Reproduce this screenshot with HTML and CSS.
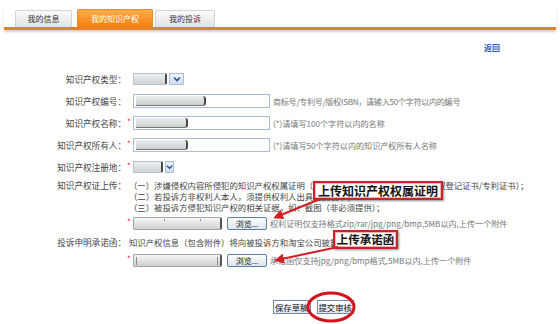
FILE: index.html
```html
<!DOCTYPE html>
<html lang="zh-CN">
<head>
<meta charset="utf-8">
<title>我的知识产权</title>
<link rel="stylesheet" href="styles.css">
</head>
<body>
<div class="tabs">
  <div class="tab t1">我的信息</div>
  <div class="tab t2">我的知识产权</div>
  <div class="tab t3">我的投诉</div>
</div>
<div class="back"><span class="back-link">返回</span></div>

<div class="form">
  <div class="row">
    <div class="lbl">知识产权类型：</div><div class="req"></div>
    <div class="select s1"><span class="sblur sb34"></span><span class="sarrow"><svg width="8" height="6" viewBox="0 0 8 6"><path d="M1 1.5 L4 4.5 L7 1.5" fill="none" stroke="#2b4f93" stroke-width="1.6"/></svg></span></div>
  </div>
  <div class="row">
    <div class="lbl">知识产权编号：</div><div class="req"></div>
    <div class="input"><span class="blur bw70"></span></div>
    <div class="hint tight">商标号/专利号/版权ISBN，请输入50个字符以内的编号</div>
  </div>
  <div class="row">
    <div class="lbl">知识产权名称：</div><div class="req">*</div>
    <div class="input"><span class="blur bw52"></span></div>
    <div class="hint">(*)请填写100个字符以内的名称</div>
  </div>
  <div class="row">
    <div class="lbl">知识产权所有人：</div><div class="req">*</div>
    <div class="input"><span class="blur bw52"></span></div>
    <div class="hint">(*)请填写50个字符以内的知识产权所有人名称</div>
  </div>
  <div class="row">
    <div class="lbl">知识产权注册地：</div><div class="req">*</div>
    <div class="select s2"><span class="sblur sb30"></span><span class="sarrow sa-small"><svg width="8" height="6" viewBox="0 0 8 6"><path d="M1 1.5 L4 4.5 L7 1.5" fill="none" stroke="#2b4f93" stroke-width="1.6"/></svg></span></div>
  </div>

  <div class="drow d1">
    <div class="lbl">知识产权证上传：</div>
    <div class="desc">
      <div>（一）涉嫌侵权内容所侵犯的知识产权权属证明（如：商标注册证/商标受理书/著作权登记证书/专利证书）；</div>
      <div>（二）若投诉方非权利人本人，须提供权利人出具的授权书；</div>
      <div>（三）被投诉方侵犯知识产权的相关证据，如：截图（非必须提供）；</div>
    </div>
  </div>
  <div class="row frow f1">
    <div class="lbl"></div><div class="req">*</div>
    <div class="fbox"><span class="tick"></span><span class="tick tk2"></span></div>
    <div class="browse">浏览...</div>
    <div class="hint fhint">权利证明仅支持格式zip/rar/jpg/png/bmp,5MB以内,上传一个附件</div>
  </div>

  <div class="drow d2">
    <div class="lbl">投诉申明承诺函：</div>
    <div class="desc">
      <div>知识产权信息（包含附件）将向被投诉方和淘宝公司披露。</div>
    </div>
  </div>
  <div class="row frow f2">
    <div class="lbl"></div><div class="req">*</div>
    <div class="fbox"><span class="tick tk0"></span><span class="tick tk3"></span></div>
    <div class="browse">浏览...</div>
    <div class="hint fhint">承诺函仅支持jpg/png/bmp格式,5MB以内,上传一个附件</div>
  </div>

  <div class="btns">
    <div class="btn">保存草稿</div>
    <div class="btn">提交审核</div>
  </div>
</div>

<div class="callout c1">上传知识产权权属证明</div>
<div class="callout c2">上传承诺函</div>

<svg class="overlay" width="560" height="324" viewBox="0 0 560 324">
  <defs>
    <marker id="ah" markerWidth="5" markerHeight="5" refX="3.5" refY="2.5" orient="auto" markerUnits="strokeWidth">
      <path d="M0,0 L5,2.5 L0,5 z" fill="#d21f26"/>
    </marker>
  </defs>
  <line x1="320" y1="199" x2="276" y2="217" stroke="#d21f26" stroke-width="2" marker-end="url(#ah)"/>
  <line x1="338" y1="247" x2="277" y2="260" stroke="#d21f26" stroke-width="2" marker-end="url(#ah)"/>
  <ellipse cx="331" cy="307" rx="23" ry="14" fill="none" stroke="#d3141c" stroke-width="3"/>
</svg>
</body>
</html>
```
FILE: styles.css
```css
* { box-sizing: border-box; }
body {
  margin: 0;
  width: 560px;
  height: 324px;
  background: #fff;
  font-family: "Noto Sans CJK SC", "Noto Sans", sans-serif;
  font-size: 8.4px;
  color: #444;
  position: relative;
  overflow: hidden;
}
.tabs {
  display: flex;
  align-items: flex-end;
  margin: 9px 4px 0;
  padding-left: 11px;
  height: 21px;
  border-bottom: 3px solid #e97f26;
  box-shadow: 0 2px 2px rgba(0, 0, 0, 0.18);
}
.tab {
  height: 17px;
  line-height: 16px;
  text-align: center;
  font-size: 8px;
  color: #333;
  background: linear-gradient(#fbfbfb, #e2e2e2);
  border: 1px solid #d3d3d3;
  border-bottom: none;
  border-radius: 2px 2px 0 0;
}
.t1 { width: 57px; margin-right: 5px; }
.t2 {
  width: 76px;
  height: 18px;
  line-height: 17px;
  margin-right: 2px;
  background: linear-gradient(#ffae4c, #f47e0e);
  border-color: #ef8a2a;
  color: #fff;
}
.t3 { width: 60px; }
.back {
  margin-top: 13px;
  height: 10px;
  line-height: 10px;
  text-align: right;
  padding-right: 60px;
  font-size: 8px;
}
.back-link { color: #3460b5; font-weight: bold; }
.form { padding-top: 11px; }
.row {
  display: flex;
  align-items: center;
  height: 14px;
  margin-top: 8px;
}
.lbl {
  width: 126px;
  flex: none;
  text-align: right;
  font-size: 8.6px;
  color: #444;
  white-space: nowrap;
}
.req {
  width: 7px;
  flex: none;
  color: #e0242a;
  padding-left: 1px;
  font-size: 8px;
  line-height: 8px;
  align-self: flex-start;
  padding-top: 2px;
}
.input {
  width: 137px;
  height: 14px;
  border: 1px solid #a9bed4;
  display: flex;
  align-items: center;
  padding-left: 2px;
}
.blur {
  height: 10px;
  background: linear-gradient(#eceeee, #cbcfcf);
  border-right: 2px solid #4a4a4a;
  border-bottom: 1px solid #777;
  border-radius: 0 3px 3px 0;
}
.bw70 { width: 70px; }
.bw52 { width: 52px; }
.hint {
  margin-left: 3px;
  color: #777;
  font-size: 8.1px;
  white-space: nowrap;
}
.tight { letter-spacing: -0.3px; }
.select {
  display: flex;
  align-items: center;
  height: 13px;
}
.sblur {
  height: 12px;
  background: linear-gradient(#eef0f0, #cfd3d3);
  border: 1px solid #b7c3cf;
  border-right: 2px solid #4a4a4a;
  border-radius: 0 2px 2px 0;
}
.sb34 { width: 34px; }
.sb30 { width: 30px; }
.sarrow {
  margin-left: 2px;
  width: 15px;
  height: 12px;
  background: linear-gradient(#eef3fb, #cfdcef);
  border: 1px solid #a9bedb;
  display: flex;
  align-items: center;
  justify-content: center;
}
.sa-small { width: 9px; }
.drow {
  display: flex;
  line-height: 11px;
}
.d1 { margin-top: 6px; }
.d2 { margin-top: 7px; }
.drow .lbl { line-height: 11px; }
.desc {
  padding-left: 3px;
  color: #444;
  white-space: nowrap;
}
.f1 { margin-top: 3px; }
.f2 { margin-top: 5px; }
.fbox {
  position: relative;
  width: 89px;
  height: 13px;
  background: linear-gradient(#f7f7f7, #cdd0d0);
  border: 1px solid #a3a3a3;
  border-right: 2px solid #555;
  border-radius: 2px;
}
.tick {
  position: absolute;
  top: 1px;
  left: 30px;
  width: 1px;
  height: 2px;
  background: #888;
}
.tk2 { left: 66px; }
.tk0 { left: 2px; height: 8px; top: 2px; }
.tk3 { left: 83px; height: 8px; top: 2px; }
.browse {
  margin-left: 5px;
  width: 40px;
  height: 13px;
  border: 1px solid #5c7ca6;
  border-radius: 2px;
  background: linear-gradient(#ffffff, #dce4ee);
  font-size: 8px;
  line-height: 11px;
  text-align: center;
  color: #222;
}
.fhint { margin-left: 3px; }
.btns {
  display: flex;
  gap: 6px;
  padding-left: 273px;
  margin-top: 33px;
}
.btn {
  height: 14px;
  line-height: 12px;
  padding: 0 1px;
  border: 1px solid #7489ad;
  background: linear-gradient(#ffffff, #e3e7ee);
  font-size: 8.4px;
  color: #111;
  white-space: nowrap;
}
.callout {
  position: absolute;
  background: #fff;
  border: 2px solid #c9232b;
  box-shadow: 1px 1px 2px rgba(0, 0, 0, 0.45), inset 0 0 0 1px #f4b4b4;
  font-weight: bold;
  color: #111;
  font-size: 12px;
  line-height: 15px;
  text-align: center;
  white-space: nowrap;
}
.c1 { left: 313px; top: 181px; width: 130px; height: 19px; }
.c2 { left: 333px; top: 230px; width: 65px; height: 19px; font-size: 11.5px; }
.overlay {
  position: absolute;
  left: 0;
  top: 0;
  pointer-events: none;
}
```
